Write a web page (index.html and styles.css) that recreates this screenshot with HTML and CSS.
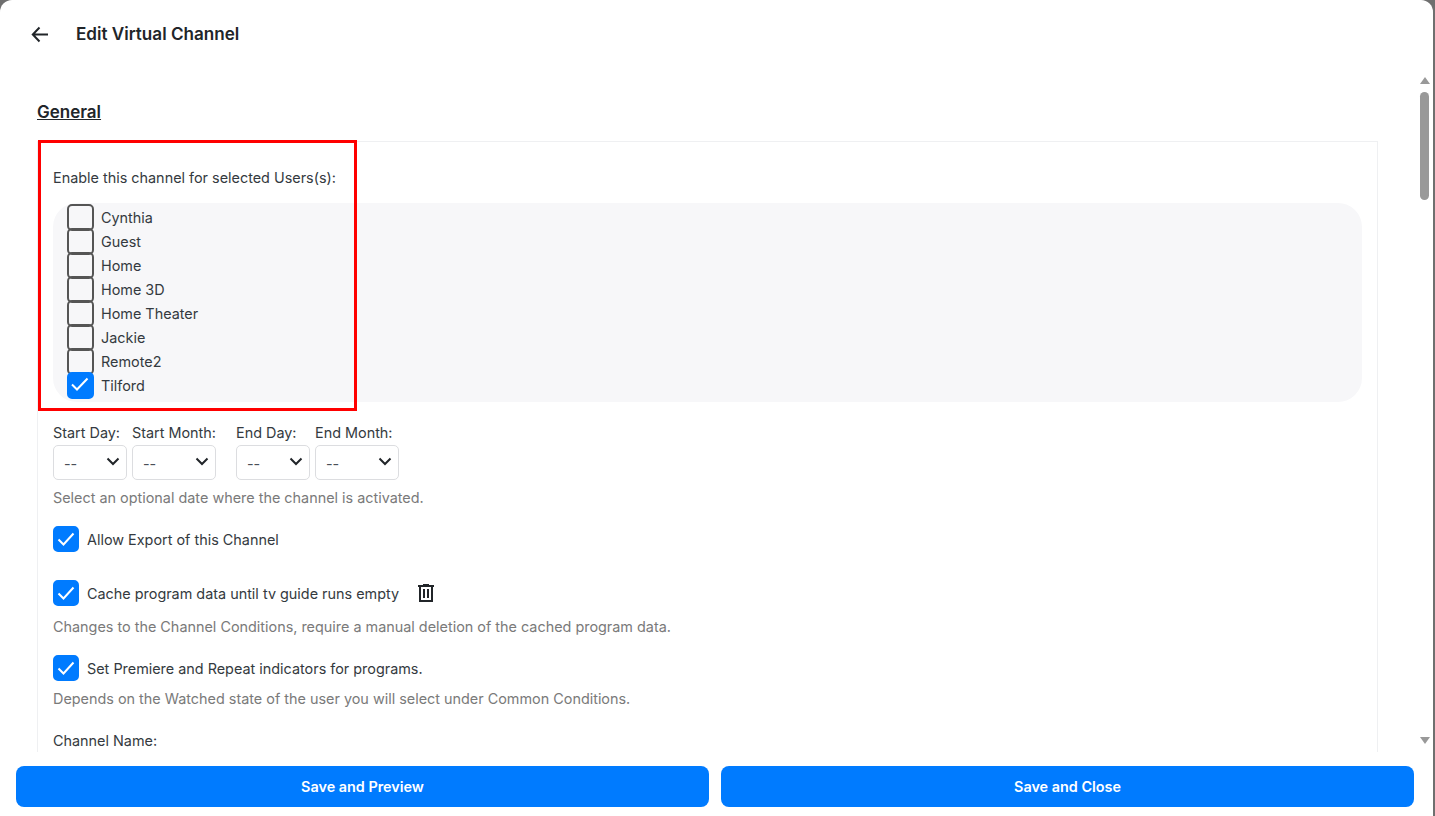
FILE: index.html
```html
<!DOCTYPE html>
<html lang="en">
<head>
<meta charset="utf-8">
<title>Edit Virtual Channel</title>
<link rel="stylesheet" href="styles.css">
</head>
<body>
<div class="modal">
  <header class="head">
    <button class="back" aria-label="Back">
      <svg width="24" height="24" viewBox="0 0 24 24"><path d="M20 12.500H5.500M11.500 5.500 4.800 12.500l6.700 7" fill="none" stroke="#212529" stroke-width="2"/></svg>
    </button>
    <h1 class="title">Edit Virtual Channel</h1>
  </header>
  <div class="middle">
    <main class="scroll">
      <h2 class="section">General</h2>
      <div class="fieldset">
        <div class="label users-label">Enable this channel for selected Users(s):</div>
        <div class="users">
          <label class="user"><span class="box"></span>Cynthia</label>
          <label class="user"><span class="box"></span>Guest</label>
          <label class="user"><span class="box"></span>Home</label>
          <label class="user"><span class="box"></span>Home 3D</label>
          <label class="user"><span class="box"></span>Home Theater</label>
          <label class="user"><span class="box"></span>Jackie</label>
          <label class="user"><span class="box"></span>Remote2</label>
          <label class="user"><span class="box on"><svg width="27" height="27" viewBox="0 0 27 27"><path d="M5 12.500 10 17.500 20.500 6.500" fill="none" stroke="#fff" stroke-width="2"/></svg></span>Tilford</label>
        </div>
        <div class="dates">
          <div class="date"><div class="label">Start Day:</div><div class="select sm">--<svg class="chev" width="16" height="16" viewBox="0 0 16 16"><path d="M2.500 5.500 8 11l5.500-5.500" fill="none" stroke="#212529" stroke-width="2"/></svg></div></div>
          <div class="date"><div class="label">Start Month:</div><div class="select lg">--<svg class="chev" width="16" height="16" viewBox="0 0 16 16"><path d="M2.500 5.500 8 11l5.500-5.500" fill="none" stroke="#212529" stroke-width="2"/></svg></div></div>
          <div class="date gap"><div class="label">End Day:</div><div class="select sm">--<svg class="chev" width="16" height="16" viewBox="0 0 16 16"><path d="M2.500 5.500 8 11l5.500-5.500" fill="none" stroke="#212529" stroke-width="2"/></svg></div></div>
          <div class="date"><div class="label">End Month:</div><div class="select lg">--<svg class="chev" width="16" height="16" viewBox="0 0 16 16"><path d="M2.500 5.500 8 11l5.500-5.500" fill="none" stroke="#212529" stroke-width="2"/></svg></div></div>
        </div>
        <p class="hint hint-date">Select an optional date where the channel is activated.</p>
        <label class="check export"><span class="box on"><svg width="26" height="26" viewBox="0 0 26 26"><path d="M5.500 13.500 10.500 18.500 20.500 7.500" fill="none" stroke="#fff" stroke-width="2"/></svg></span>Allow Export of this Channel</label>
        <label class="check cache"><span class="box on"><svg width="26" height="26" viewBox="0 0 26 26"><path d="M5.500 13.500 10.500 18.500 20.500 7.500" fill="none" stroke="#fff" stroke-width="2"/></svg></span>Cache program data until tv guide runs empty
          <svg class="trash" width="24" height="24" viewBox="0 0 24 24"><path fill="#212529" fill-rule="evenodd" d="M9 3v1H4v2h1v15h14V6h1V4h-5V3H9zM7 6h10v13H7V6zm2 2v9h2V8H9zm4 0v9h2V8h-2z"/></svg>
        </label>
        <p class="hint hint-cache">Changes to the Channel Conditions, require a manual deletion of the cached program data.</p>
        <label class="check premiere"><span class="box on"><svg width="26" height="26" viewBox="0 0 26 26"><path d="M5.500 13.500 10.500 18.500 20.500 7.500" fill="none" stroke="#fff" stroke-width="2"/></svg></span>Set Premiere and Repeat indicators for programs.</label>
        <p class="hint hint-prem">Depends on the Watched state of the user you will select under Common Conditions.</p>
        <div class="label name">Channel Name:</div>
      </div>
    </main>
    <div class="scrollbar">
      <span class="arrow up"></span>
      <span class="thumb"></span>
      <span class="arrow down"></span>
    </div>
  </div>
  <footer class="foot">
    <button class="btn">Save and Preview</button>
    <button class="btn">Save and Close</button>
  </footer>
  <div class="annotation"></div>
</div>
</body>
</html>
```
FILE: styles.css
```css
* { box-sizing: border-box; }
html, body { margin: 0; height: 100%; overflow: hidden; background: #6f6f6f; }
body { font-family: Inter, "Liberation Sans", sans-serif; font-size: 14.4px; color: #343a40; }
.modal { position: relative; width: 1433px; height: 816px; background: #fff; border-radius: 12px 12px 0 0; display: flex; flex-direction: column; }
.head { height: 68px; padding: 0 0 0 28px; display: flex; align-items: center; flex: none; }
.back { width: 24px; height: 24px; padding: 0; border: 0; background: none; margin-right: 24px; display: flex; }
.title { margin: 0; font-size: 17.1px; font-weight: 600; line-height: 24px; color: #212529; }
.middle { flex: 1; min-height: 0; display: flex; height: 684px; }
.scroll { flex: 1; min-width: 0; overflow: hidden; padding: 32px 40px 0 37px; }
.section { margin: 0 0 17px; font-size: 17px; font-weight: 600; line-height: 24px; text-decoration: underline; color: #212529; }
.fieldset { border: 1px solid #eff0f2; border-bottom: 0; padding: 24px 15px 0; height: 700px; }
.label { line-height: 24px; }
.users-label { margin-bottom: 13px; }
.users { background: #f7f7f9; border-radius: 24px; padding: 2px 14px; height: 199px; }
.user { display: flex; align-items: center; height: 24px; gap: 7px; }
.box { flex: none; display: block; border: 2px solid #555; border-radius: 5px; width: 27px; height: 27px; }
.box svg { display: block; margin: -2px; }
.box.on { background: #007bff; border-color: #007bff; }
.check .box { width: 26px; height: 26px; }
.dates { display: flex; gap: 5px; margin-top: 19px; }
.date.gap { margin-left: 15px; }
.select { position: relative; height: 35px; border: 1px solid #dcdde0; border-radius: 5px; background: #fff; padding: 8px 10px 0; color: #495057; line-height: 20px; }
.select.sm { width: 74px; }
.select.lg { width: 84px; }
.chev { position: absolute; right: 5px; top: 7px; }
.hint { margin: 0; color: #7a7a7a; line-height: 24px; }
.hint-date { margin-top: 6px; }
.check { display: flex; align-items: center; gap: 8px; height: 26px; }
.export { margin-top: 16px; }
.cache { margin-top: 28px; }
.trash { margin-left: 7px; }
.hint-cache { margin-top: 9px; }
.premiere { margin-top: 16px; }
.hint-prem { margin-top: 6px; }
.name { margin-top: 18px; }
.scrollbar { flex: none; width: 13px; margin: 9px 2px 0 0; display: flex; flex-direction: column; align-items: center; height: 667px; }
.arrow { width: 0; height: 0; border-left: 5px solid transparent; border-right: 5px solid transparent; flex: none; }
.arrow.up { border-bottom: 7px solid #999; }
.arrow.down { border-top: 7px solid #999; margin-top: auto; }
.thumb { width: 9px; height: 108px; background: #999; border-radius: 5px; margin-top: 8px; flex: none; }
.foot { flex: none; height: 64px; padding: 14px 19px 9px 16px; display: flex; gap: 12px; }
.btn { flex: 1; height: 41px; border: 0; border-radius: 8px; background: #007bff; color: #fff; font: 600 14.4px Inter, "Liberation Sans", sans-serif; }
.annotation { position: absolute; left: 38px; top: 140px; width: 319px; height: 271px; border: 3px solid #f00; }
```
